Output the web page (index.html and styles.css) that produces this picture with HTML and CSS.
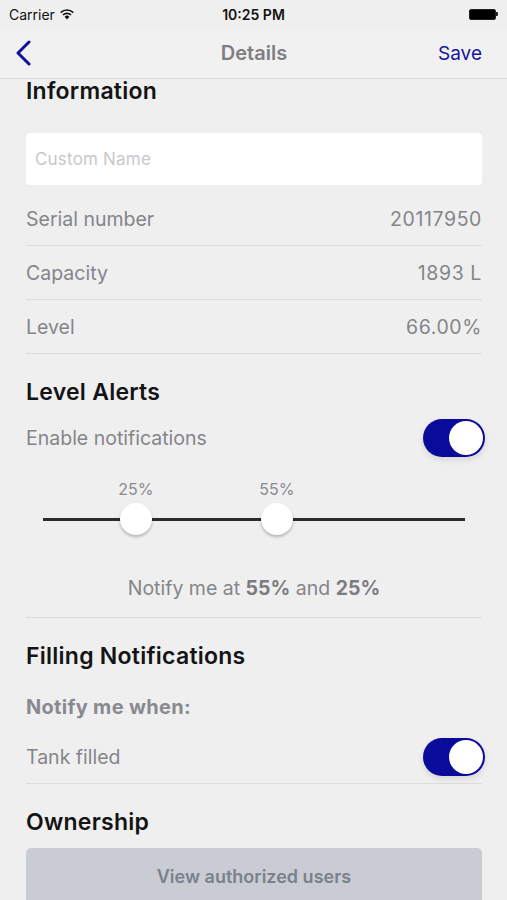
FILE: index.html
```html
<!DOCTYPE html>
<html>

<head>
	<meta charset="utf-8">
	<link rel="stylesheet" href="styles.css">
</head>

<body>
	<div class="statusbar">
		<div class="carrier">Carrier
			<svg class="wifi" width="14" height="11" viewBox="0 0 14 11">
				<path d="M7 10.5 L4.6 7.8 A3.4 3.4 0 0 1 9.4 7.8 Z" fill="#111" />
				<path d="M3.5 6.6 A5 5 0 0 1 10.5 6.6 L11.6 5.4 A6.6 6.6 0 0 0 2.4 5.4 Z" fill="#111" />
				<path d="M1.3 4.2 A8 8 0 0 1 12.7 4.2 L13.8 3 A9.6 9.6 0 0 0 0.2 3 Z" fill="#111" />
			</svg>
		</div>
		<div class="clock">10:25 PM</div>
		<div class="battery">
			<span class="cell"></span><span class="nub"></span>
		</div>
	</div>

	<div class="navbar">
		<svg class="back" width="19" height="26" viewBox="0 0 19 26">
			<path d="M15 2 L4 13 L15 24" fill="none" stroke="#10109c" stroke-width="3" stroke-linecap="round" stroke-linejoin="round" />
		</svg>
		<div class="title">Details</div>
		<div class="save">Save</div>
	</div>

	<div class="content">
		<h2 class="section first">Information</h2>
		<div class="namefield">Custom Name</div>

		<div class="row">
			<span>Serial number</span>
			<span>20117950</span>
		</div>
		<div class="row">
			<span>Capacity</span>
			<span>1893 L</span>
		</div>
		<div class="row">
			<span>Level</span>
			<span>66.00%</span>
		</div>

		<h2 class="section">Level Alerts</h2>
		<div class="switchrow">
			<span>Enable notifications</span>
			<div class="toggle"><span class="knob"></span></div>
		</div>

		<div class="slider">
			<div class="track"></div>
			<span class="mark" style="left: 22%">25%</span>
			<span class="mark" style="left: 55.4%">55%</span>
			<span class="thumb" style="left: 22%"></span>
			<span class="thumb" style="left: 55.4%"></span>
		</div>

		<p class="summary">Notify me at <b>55%</b> and <b>25%</b></p>

		<h2 class="section">Filling Notifications</h2>
		<p class="subhead">Notify me when:</p>
		<div class="switchrow divided">
			<span>Tank filled</span>
			<div class="toggle"><span class="knob"></span></div>
		</div>

		<h2 class="section">Ownership</h2>
		<button type="button" class="usersbutton">View authorized users</button>
	</div>
</body>

</html>
```

FILE: styles.css
```css
body {
	margin: 0;
	background-color: #efeff0;
	font-family: Inter, "Liberation Sans", sans-serif;
	color: #858589;
	overflow: hidden;
}

.statusbar {
	height: 28px;
	display: flex;
	align-items: center;
	justify-content: space-between;
	padding: 0 9px 0 9px;
	font-size: 14px;
	color: #111;
}

.carrier {
	flex: 1;
	display: flex;
	align-items: center;
	gap: 5px;
}

.clock {
	font-weight: 600;
}

.battery {
	flex: 1;
	display: flex;
	justify-content: flex-end;
	align-items: center;
}

.cell {
	width: 25px;
	height: 9px;
	background-color: #000;
	border: 1px solid #222;
	border-radius: 2px;
}

.nub {
	width: 2px;
	height: 4px;
	background-color: #222;
	border-radius: 0 1px 1px 0;
}

.navbar {
	height: 50px;
	display: grid;
	grid-template-columns: 1fr auto 1fr;
	align-items: center;
	padding: 0 25px 0 14px;
	border-bottom: 1px solid #d9d9dc;
	background-color: #f1f1f2;
}

.title {
	font-size: 20px;
	font-weight: 600;
	color: #7e7e80;
	padding-left: 12px;
}

.save {
	text-align: right;
	font-size: 19px;
	color: #16169a;
}

.content {
	padding: 0 25px 0 26px;
}

.section {
	margin: 26px 0 0 0;
	font-size: 23px;
	letter-spacing: 0.25px;
	line-height: 24px;
	font-weight: 600;
	color: #141414;
}

.section.first {
	margin-top: 0;
}

.namefield {
	margin-top: 30px;
	height: 52px;
	padding-left: 9px;
	display: flex;
	align-items: center;
	background-color: #fff;
	border-radius: 4px;
	font-size: 17px;
	letter-spacing: 0.2px;
	color: #c8c8cc;
}

.row {
	height: 53px;
	display: flex;
	align-items: center;
	justify-content: space-between;
	border-bottom: 1px solid #dcdcde;
	font-size: 19.5px;
}

.row span:last-child {
	letter-spacing: 0.6px;
}

.namefield + .row {
	margin-top: 7px;
}

.switchrow {
	height: 38px;
	margin-top: 15px;
	display: flex;
	align-items: center;
	justify-content: space-between;
	font-size: 19.5px;
}

.switchrow.divided {
	margin-top: 19px;
	padding-bottom: 7px;
	border-bottom: 1px solid #dcdcde;
}

.toggle {
	width: 62px;
	height: 38px;
	margin-right: -3px;
	box-sizing: border-box;
	padding: 2px;
	display: flex;
	justify-content: flex-end;
	border-radius: 19px;
	background-color: #0a0a9b;
	box-shadow: 0 3px 6px #0000001a;
}

.knob {
	width: 34px;
	height: 34px;
	border-radius: 50%;
	background-color: #fff;
}

.slider {
	position: relative;
	height: 70px;
	margin: 12px 17px 0 17px;
}

.track {
	position: absolute;
	left: 0;
	right: 0;
	top: 49px;
	height: 3px;
	background-color: #2b2b2b;
}

.mark {
	position: absolute;
	top: 11px;
	transform: translateX(-50%);
	font-size: 16px;
	line-height: 18px;
	color: #8a8a8e;
}

.thumb {
	position: absolute;
	top: 34px;
	width: 32px;
	height: 32px;
	margin-left: -16px;
	border-radius: 50%;
	background-color: #fff;
	box-shadow: 0 2px 3px #00000040;
}

.summary {
	margin: 37px 0 0 0;
	padding-bottom: 17px;
	border-bottom: 1px solid #dcdcde;
	text-align: center;
	font-size: 19.5px;
	line-height: 24px;
}

.summary b {
	font-weight: 700;
	color: #7c7c80;
}

.subhead {
	margin: 27px 0 0 0;
	font-size: 20px;
	letter-spacing: 0.3px;
	line-height: 24px;
	font-weight: 700;
	color: #898a90;
}

.usersbutton {
	display: block;
	width: 100%;
	height: 56px;
	margin-top: 14px;
	border: none;
	border-radius: 5px;
	background-color: #c9ccd2;
	font-family: Inter, "Liberation Sans", sans-serif;
	font-size: 18px;
	font-weight: 600;
	color: #7a818d;
}
```
